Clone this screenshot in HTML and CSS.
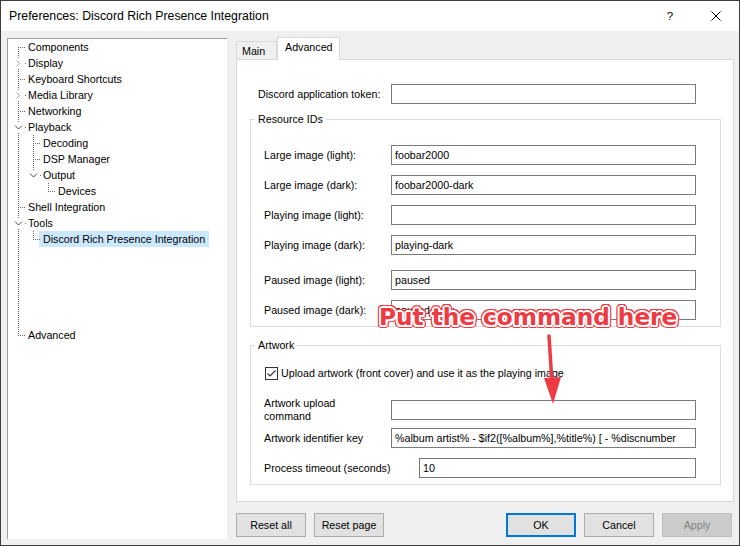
FILE: index.html
```html
<!DOCTYPE html>
<html>
<head>
<meta charset="utf-8">
<link rel="stylesheet" href="styles.css">
</head>
<body>
<div class="window">
  <div class="titlebar">
    <div class="title">Preferences: Discord Rich Presence Integration</div>
    <div class="tb-btn help">?</div>
    <div class="tb-btn close"><svg width="10" height="10" viewBox="0 0 10 10"><path d="M0.5 0.5 L9.5 9.5 M9.5 0.5 L0.5 9.5" stroke="#000" stroke-width="1" fill="none"/></svg></div>
  </div>
  <div class="main">
    <div class="tree">
      <div class="row"><span class="c top"></span><span class="lbl">Components</span></div>
      <div class="row"><span class="c pipe exp"><svg class="chev" width="9" height="9" viewBox="0 0 9 9"><path d="M2.5 1.5 L5.5 4.5 L2.5 7.5" stroke="#a6a6a6" fill="none"/></svg></span><span class="lbl">Display</span></div>
      <div class="row"><span class="c tee"></span><span class="lbl">Keyboard Shortcuts</span></div>
      <div class="row"><span class="c pipe exp"><svg class="chev" width="9" height="9" viewBox="0 0 9 9"><path d="M2.5 1.5 L5.5 4.5 L2.5 7.5" stroke="#a6a6a6" fill="none"/></svg></span><span class="lbl">Media Library</span></div>
      <div class="row"><span class="c tee"></span><span class="lbl">Networking</span></div>
      <div class="row"><span class="c pipe exp"><svg class="chev" width="9" height="9" viewBox="0 0 9 9"><path d="M1 2.5 L4.5 6 L8 2.5" stroke="#4a4a4a" fill="none"/></svg></span><span class="lbl">Playback</span></div>
      <div class="row"><span class="c pipe"></span><span class="c tee"></span><span class="lbl">Decoding</span></div>
      <div class="row"><span class="c pipe"></span><span class="c tee"></span><span class="lbl">DSP Manager</span></div>
      <div class="row"><span class="c pipe"></span><span class="c half exp"><svg class="chev" width="9" height="9" viewBox="0 0 9 9"><path d="M1 2.5 L4.5 6 L8 2.5" stroke="#4a4a4a" fill="none"/></svg></span><span class="lbl">Output</span></div>
      <div class="row"><span class="c pipe"></span><span class="c"></span><span class="c end"></span><span class="lbl">Devices</span></div>
      <div class="row"><span class="c tee"></span><span class="lbl">Shell Integration</span></div>
      <div class="row"><span class="c pipe exp"><svg class="chev" width="9" height="9" viewBox="0 0 9 9"><path d="M1 2.5 L4.5 6 L8 2.5" stroke="#4a4a4a" fill="none"/></svg></span><span class="lbl">Tools</span></div>
      <div class="row"><span class="c pipe"></span><span class="c end"></span><span class="lbl sel">Discord Rich Presence Integration</span></div>
      <div class="row blank"><span class="c pipe"></span></div>
      <div class="row"><span class="c end"></span><span class="lbl">Advanced</span></div>
    </div>
    <div class="right">
      <div class="tabs">
        <div class="tab tab-main">Main</div>
        <div class="tab tab-active">Advanced</div>
      </div>
      <div class="page">
        <div class="token-row">
          <div class="tlabel">Discord application token:</div>
          <div class="inp"></div>
        </div>
        <fieldset class="group res">
          <legend>Resource IDs</legend>
          <div class="frow first"><div class="flabel">Large image (light):</div><div class="inp">foobar2000</div></div>
          <div class="frow"><div class="flabel">Large image (dark):</div><div class="inp">foobar2000-dark</div></div>
          <div class="frow"><div class="flabel">Playing image (light):</div><div class="inp"></div></div>
          <div class="frow"><div class="flabel">Playing image (dark):</div><div class="inp">playing-dark</div></div>
          <div class="frow sp"><div class="flabel">Paused image (light):</div><div class="inp">paused</div></div>
          <div class="frow"><div class="flabel">Paused image (dark):</div><div class="inp">paused-dark</div></div>
        </fieldset>
        <fieldset class="group art">
          <legend>Artwork</legend>
          <div class="check-row">
            <span class="checkbox"><svg width="11" height="11" viewBox="0 0 11 11"><path d="M1.5 5.5 L4 8 L9.5 2.5" stroke="#333" stroke-width="1.2" fill="none"/></svg></span>
            <span>Upload artwork (front cover) and use it as the playing image</span>
          </div>
          <div class="frow upload"><div class="flabel two">Artwork upload<br>command</div><div class="inp"></div></div>
          <div class="frow ident"><div class="flabel">Artwork identifier key</div><div class="inp">%album artist% - $if2([%album%],%title%) [ - %discnumber</div></div>
          <div class="frow timeout"><div class="flabel wide">Process timeout (seconds)</div><div class="inp short">10</div></div>
        </fieldset>
      </div>
      <div class="buttons">
        <div class="btn">Reset all</div>
        <div class="btn gap">Reset page</div>
        <div class="btn ok">OK</div>
        <div class="btn gap">Cancel</div>
        <div class="btn gap disabled">Apply</div>
      </div>
    </div>
  </div>
  <div class="annot">Put the command here</div>
  <svg class="arrow" width="30" height="80" viewBox="0 0 30 80">
    <path d="M13 5 L16 52" stroke="#ec3b43" stroke-width="3.5" stroke-linecap="round" fill="none"/>
    <polygon points="8,47 25,46 17,73" fill="#ec3b43"/>
  </svg>
</div>
</body>
</html>
```

FILE: styles.css
```css
* { box-sizing: border-box; }
html, body { margin: 0; padding: 0; }
body {
  width: 740px;
  height: 546px;
  font-family: "Liberation Sans", Arial, sans-serif;
  font-size: 10.7px;
  color: #000;
  background: #fff;
  overflow: hidden;
}
.window {
  position: relative;
  width: 740px;
  height: 546px;
  border: 1px solid #3e3e3e;
  background: #f0f0f0;
  display: flex;
  flex-direction: column;
}
.titlebar {
  height: 30px;
  flex: none;
  background: #fff;
  display: flex;
  align-items: center;
  padding-left: 8px;
}
.title { flex: 1; font-size: 12.3px; }
.tb-btn {
  width: 46px;
  height: 30px;
  display: flex;
  align-items: center;
  justify-content: center;
}
.help { font-size: 11.5px; }
.main {
  flex: 1;
  display: flex;
  padding: 6px 0 0 6px;
}

/* tree */
.tree {
  margin-top: 1px;
  width: 220px;
  height: 501px;
  background: #fff;
  border-left: 1px solid #a0a0a0;
  border-top: 1px solid #a0a0a0;
  padding-left: 3px;
}
.row {
  display: flex;
  height: 16px;
  align-items: center;
}
.row.blank { height: 80px; align-items: stretch; }
.c {
  position: relative;
  flex: none;
  width: 15px;
  height: 100%;
  align-self: stretch;
}
.c::before, .c::after { content: ""; position: absolute; }
.pipe::before, .tee::before {
  left: 7px; top: 0; bottom: 0; width: 1px;
  background-image: linear-gradient(to bottom, #6a6a6a 50%, transparent 50%);
  background-size: 1px 2px;
}
.end::before, .half::before {
  left: 7px; top: 0; height: 9px; width: 1px;
  background-image: linear-gradient(to bottom, #6a6a6a 50%, transparent 50%);
  background-size: 1px 2px;
}
.top::before {
  left: 7px; top: 8px; bottom: 0; width: 1px;
  background-image: linear-gradient(to bottom, #6a6a6a 50%, transparent 50%);
  background-size: 1px 2px;
}
.tee::after, .end::after, .top::after {
  left: 7px; top: 8px; width: 8px; height: 1px;
  background-image: linear-gradient(to right, #6a6a6a 50%, transparent 50%);
  background-size: 2px 1px;
}
.exp::after {
  left: 14px; top: 8px; width: 1px; height: 1px;
  background: #6a6a6a;
}
.chev {
  position: absolute;
  left: 3px;
  top: 4px;
  background: #fff;
  display: block;
}
.lbl {
  padding: 0 4px 0 2px;
  line-height: 16px;
  white-space: nowrap;
}
.lbl.sel { background: #cce8ff; margin-left: -2px; padding-left: 4px; }

/* right side */
.right {
  margin-left: 9px;
  width: 498px;
  display: flex;
  flex-direction: column;
}
.tabs {
  height: 22px;
  display: flex;
  align-items: flex-end;
  position: relative;
  z-index: 1;
}
.tab {
  border: 1px solid #d9d9d9;
  border-bottom: none;
  display: flex;
  white-space: nowrap;
}
.tab-main {
  width: 41px;
  height: 18px;
  background: #f0f0f0;
  align-items: center;
  padding-left: 5px;
}
.tab-active {
  width: 63px;
  height: 23px;
  margin-bottom: -1px;
  background: #fff;
  padding: 3px 0 0 7px;
}
.page {
  height: 443px;
  background: #fff;
  border: 1px solid #d9d9d9;
  padding: 24px 12px 0 21px;
}
.token-row { display: flex; align-items: center; }
.tlabel { width: 133px; white-space: nowrap; }
.inp {
  width: 305px;
  height: 20px;
  border: 1px solid #7a7a7a;
  background: #fff;
  padding: 0 3px;
  line-height: 18px;
  white-space: nowrap;
  overflow: hidden;
}
.inp.short { width: 277px; }
.group {
  margin: 8px 0 0 -8px;
  border: 1px solid #dcdcdc;
  padding: 19px 0 6px 13px;
  min-width: 0;
}
.group legend {
  padding: 0 3px;
  margin-left: -9px;
  line-height: 14px;
  height: 14px;
}
.group.art { margin-top: 11px; padding-top: 14px; }
.frow { display: flex; align-items: center; margin-top: 10px; }
.frow.first { margin-top: 0; }
.frow.sp { margin-top: 15px; }
.frow.upload { margin-top: 17px; }
.frow.ident { margin-top: 5px; }
.frow.timeout { margin-top: 10px; }
.flabel { width: 127px; white-space: nowrap; }
.flabel.two { line-height: 13px; }
.flabel.wide { width: 155px; }
.check-row {
  height: 14px;
  display: flex;
  align-items: center;
  white-space: nowrap;
}
.checkbox {
  width: 13px;
  height: 13px;
  border: 1px solid #333;
  background: #fff;
  margin: 0 3px 0 1px;
  display: flex;
}
.checkbox svg { display: block; }

.buttons {
  margin-top: 11px;
  height: 24px;
  display: flex;
  padding-right: 2px;
}
.btn {
  width: 70px;
  height: 24px;
  background: #e1e1e1;
  border: 1px solid #adadad;
  display: flex;
  align-items: center;
  justify-content: center;
  white-space: nowrap;
}
.btn.gap { margin-left: 8px; }
.btn.ok { margin-left: auto; border: 2px solid #0078d7; }
.btn.disabled { background: #cccccc; border-color: #bfbfbf; color: #838383; }

/* annotation overlay */
.annot {
  position: absolute;
  left: 378px;
  top: 304px;
  font-family: "DejaVu Sans", sans-serif;
  font-weight: bold;
  font-size: 23.2px;
  line-height: 23.2px;
  color: #ee3b43;
  white-space: nowrap;
  text-shadow:
    1px 0 0 #fff, -1px 0 0 #fff, 0 1px 0 #fff, 0 -1px 0 #fff,
    2px 0 0 #fff, -2px 0 0 #fff, 0 2px 0 #fff, 0 -2px 0 #fff,
    1.5px 1.5px 0 #fff, -1.5px 1.5px 0 #fff, 1.5px -1.5px 0 #fff, -1.5px -1.5px 0 #fff,
    3px 0 0 #ee3b43, -3px 0 0 #ee3b43, 0 3px 0 #ee3b43, 0 -3px 0 #ee3b43,
    2.2px 2.2px 0 #ee3b43, -2.2px 2.2px 0 #ee3b43, 2.2px -2.2px 0 #ee3b43, -2.2px -2.2px 0 #ee3b43,
    3px 1.5px 0 #ee3b43, -3px 1.5px 0 #ee3b43, 3px -1.5px 0 #ee3b43, -3px -1.5px 0 #ee3b43,
    1.5px 3px 0 #ee3b43, -1.5px 3px 0 #ee3b43, 1.5px -3px 0 #ee3b43, -1.5px -3px 0 #ee3b43;
}
.arrow {
  position: absolute;
  left: 535px;
  top: 330px;
}
```
